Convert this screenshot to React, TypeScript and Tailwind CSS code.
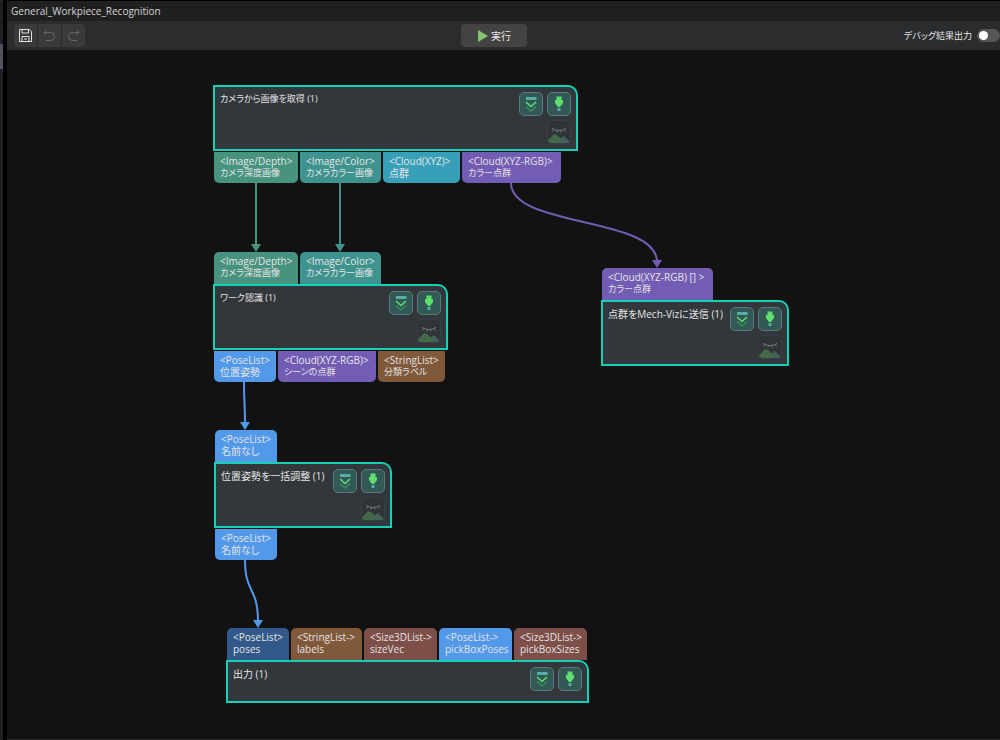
import type { ReactNode } from "react";
import clsx from "clsx";

type Port = { type: string; name: string; className: string };

type Step = {
  title: string;
  position: string;
  body: string;
  inputs: Port[];
  outputs: Port[];
  preview?: boolean;
};

const depth: Port = { type: "<Image/Depth>", name: "カメラ深度画像", className: "w-[84px] bg-[#47937f]" };
const color: Port = { type: "<Image/Color>", name: "カメラカラー画像", className: "w-[81px] bg-[#3f938e]" };

const steps: Step[] = [
  {
    title: "カメラから画像を取得 (1)",
    position: "left-[206px] top-[35px]",
    body: "w-[365px] h-[66px]",
    inputs: [],
    outputs: [
      depth,
      color,
      { type: "<Cloud(XYZ)>", name: "点群", className: "w-[77px] bg-[#389fb9]" },
      { type: "<Cloud(XYZ-RGB)>", name: "カラー点群", className: "w-[99px] bg-[#735cb4]" },
    ],
    preview: true,
  },
  {
    title: "ワーク認識 (1)",
    position: "left-[206px] top-[202px]",
    body: "w-[235px] h-[66px]",
    inputs: [depth, color],
    outputs: [
      { type: "<PoseList>", name: "位置姿勢", className: "w-[62px] bg-[#5299ea]" },
      { type: "<Cloud(XYZ-RGB)>", name: "シーンの点群", className: "w-[98px] bg-[#735cb4]" },
      { type: "<StringList>", name: "分類ラベル", className: "w-[67px] bg-[#80583a]" },
    ],
    preview: true,
  },
  {
    title: "点群をMech-Vizに送信 (1)",
    position: "left-[594px] top-[218px]",
    body: "w-[188px] h-[66px]",
    inputs: [{ type: "<Cloud(XYZ-RGB) [] >", name: "カラー点群", className: "w-[111px] bg-[#735cb4]" }],
    outputs: [],
    preview: true,
  },
  {
    title: "位置姿勢を一括調整 (1)",
    position: "left-[207px] top-[380px]",
    body: "w-[178px] h-[66px]",
    inputs: [{ type: "<PoseList>", name: "名前なし", className: "w-[62px] bg-[#5299ea]" }],
    outputs: [{ type: "<PoseList>", name: "名前なし", className: "w-[62px] bg-[#5299ea]" }],
    preview: true,
  },
  {
    title: "出力 (1)",
    position: "left-[219px] top-[578px]",
    body: "w-[363px] h-[43px]",
    inputs: [
      { type: "<PoseList>", name: "poses", className: "w-[62px] bg-[#33598a]" },
      { type: "<StringList->", name: "labels", className: "w-[71px] bg-[#80583a]" },
      { type: "<Size3DList->", name: "sizeVec", className: "w-[73px] bg-[#7d4f48]" },
      { type: "<PoseList->", name: "pickBoxPoses", className: "w-[73px] bg-[#5299ea]" },
      { type: "<Size3DList->", name: "pickBoxSizes", className: "w-[73px] bg-[#7d4f48]" },
    ],
    outputs: [],
  },
];

const edges = [
  { d: "M249 133V196", tip: "249,202", stroke: "#47937f" },
  { d: "M333 133V196", tip: "333,202", stroke: "#3f938e" },
  { d: "M504 133C504 178 650 166 650 212", tip: "650,218", stroke: "#735cb4" },
  { d: "M237 332C237 354 238 354 238 374", tip: "238,380", stroke: "#5299ea" },
  { d: "M238 510C238 544 251 536 251 572", tip: "251,578", stroke: "#5299ea" },
];

const labelSize = (text: string) => (/[ァ-ヶ]{2}|[ァ-ヶ]ー/.test(text) ? "text-[9px]" : "text-[10px]");

export default function App() {
  return (
    <div className="flex min-h-screen overflow-hidden bg-black font-['Open_Sans','Noto_Sans_CJK_JP',sans-serif] text-[10px] leading-3 text-[#e4e4e4] [font-feature-settings:'palt']">
      <div className="mr-1 w-[3px] bg-[#202022] pt-11">
        <div className="h-[25px] bg-[#50515c]" />
      </div>
      <main className="flex min-w-0 flex-1 flex-col pt-px">
        <h1 className="flex h-5 items-center bg-[#202020] px-1 text-[#d4d4d4]">General_Workpiece_Recognition</h1>
        <Toolbar />
        <Canvas />
      </main>
    </div>
  );
}

function Toolbar() {
  return (
    <div className="flex h-[29px] items-center justify-between bg-[#2b2c2e] pl-[7px]">
      <div className="flex gap-px">
        <ToolButton label="保存" className="rounded-l text-[#e2e2e2]">
          <path d="M1.5 1.5h10l2 2v10h-12z" />
          <path d="M4 1.5v3.500h6.500V1.500M4 13.500V8.500h7v5M6 11h3" />
        </ToolButton>
        <ToolButton label="元に戻す" className="text-[#66676a]">
          <path d="M2 4.500h6.500a4 4 0 0 1 0 8H4M4.500 2L2 4.500L4.500 7" />
        </ToolButton>
        <ToolButton label="やり直し" className="rounded-r text-[#66676a]">
          <path d="M13 4.500H6.500a4 4 0 0 0 0 8H11M10.500 2L13 4.500L10.500 7" />
        </ToolButton>
      </div>
      <button className="flex h-[23px] w-[66px] items-center justify-center gap-[3px] rounded bg-[#434343]">
        <svg viewBox="0 0 10 12" className="h-3 w-2.5 fill-[#85c46c]" aria-hidden="true">
          <path d="M0 0L10 6L0 12z" />
        </svg>
        実行
      </button>
      <label className="flex items-center gap-[5px] whitespace-nowrap text-[9px]">
        デバッグ結果出力
        <input
          type="checkbox"
          role="switch"
          className="h-[13px] w-[23px] appearance-none rounded-full bg-[#565656] p-0.5 before:block before:size-[9px] before:rounded-full before:bg-white checked:before:ml-auto"
        />
      </label>
    </div>
  );
}

function ToolButton({ label, className, children }: { label: string; className: string; children: ReactNode }) {
  return (
    <button aria-label={label} className={clsx("flex size-[23px] items-center justify-center bg-[#393a3c]", className)}>
      <svg viewBox="0 0 15 15" className="size-[15px] fill-none stroke-current" aria-hidden="true">
        {children}
      </svg>
    </button>
  );
}

function Canvas() {
  return (
    <div className="relative flex-1 overflow-hidden border-b border-[#2b2c2e] bg-[#121212]">
      {steps.map((step) => (
        <StepNode key={step.title} step={step} />
      ))}
      <svg className="pointer-events-none absolute inset-0 size-full" aria-hidden="true">
        {edges.map((edge) => (
          <g key={edge.tip} fill={edge.stroke} stroke={edge.stroke}>
            <path d={edge.d} fill="none" strokeWidth="2" />
            <path d="M-5 -8H5L0 0z" stroke="none" transform={`translate(${edge.tip})`} />
          </g>
        ))}
      </svg>
    </div>
  );
}

function StepNode({ step }: { step: Step }) {
  return (
    <section className={clsx("absolute", step.position)}>
      <PortRow ports={step.inputs} side="top" />
      <div
        className={clsx(
          "flex items-start justify-between rounded-tr-[10px] border-2 border-[#15d0b4] bg-[#32373b] p-[5px]",
          step.body
        )}
      >
        <h2 className={clsx("whitespace-nowrap pt-px", labelSize(step.title))}>{step.title}</h2>
        <div className="grid shrink-0 grid-cols-2 gap-1">
          <StepButton label="次まで実行">
            <path d="M7 5h10.500v3H7z" fill="#57aea2" />
            <path d="M7 10l5 4.500l5-4.500" stroke="#5de16c" strokeWidth="1.500" fill="none" />
            <path d="M7 14.500l5 4.500l5-4.500" stroke="#3c8a60" strokeWidth="1.500" fill="none" />
          </StepButton>
          <StepButton label="単独で実行">
            <path d="M9.500 4.500h5V8H16v3l-3 4h-2l-3-4V8h1.500z" fill="#5de16c" />
            <path d="M10.500 16h3v3h-3z" fill="#57aea2" />
          </StepButton>
          {step.preview && <PreviewButton />}
        </div>
      </div>
      <PortRow ports={step.outputs} side="bottom" />
    </section>
  );
}

function PortRow({ ports, side }: { ports: Port[]; side: "top" | "bottom" }) {
  if (ports.length === 0) return null;
  return (
    <ul className={clsx("flex gap-0.5 pl-px", side === "bottom" && "pt-px")}>
      {ports.map((port) => (
        <li
          key={port.name}
          className={clsx(
            "shrink-0 whitespace-nowrap pl-1.5 pt-[3px]",
            side === "top" ? "h-8 rounded-t-[5px]" : "h-[31px] rounded-b-[5px]",
            port.className
          )}
        >
          <p>{port.type}</p>
          <p className={labelSize(port.name)}>{port.name}</p>
        </li>
      ))}
    </ul>
  );
}

function StepButton({ label, children }: { label: string; children: ReactNode }) {
  return (
    <button aria-label={label} className="size-6 rounded-[5px] border border-[#5b7977] bg-[#335957]">
      <svg viewBox="1 1 22 22" className="size-full" aria-hidden="true">
        {children}
      </svg>
    </button>
  );
}

function PreviewButton() {
  return (
    <button aria-label="結果を表示" className="col-start-2 size-6 overflow-hidden rounded border border-[#393e43] bg-[#303438]">
      <svg viewBox="1 1 22 22" className="size-full" aria-hidden="true">
        <path d="M5 8.500q7 4 14 0M7 9.500l-1.500 2M10.500 10.500L10 12.500M13.500 10.500l.5 2M17 9.500l1.500 2" stroke="#73797d" fill="none" />
        <path d="M11 23l4-6q1.500-1.500 3 0l4.500 4.500V23z" fill="#42605d" />
        <path d="M1 23v-2.500L6 15q2-1.500 4 0l4 3.500q1.500 1.500 1.500 4.500z" fill="#426a49" />
      </svg>
    </button>
  );
}
